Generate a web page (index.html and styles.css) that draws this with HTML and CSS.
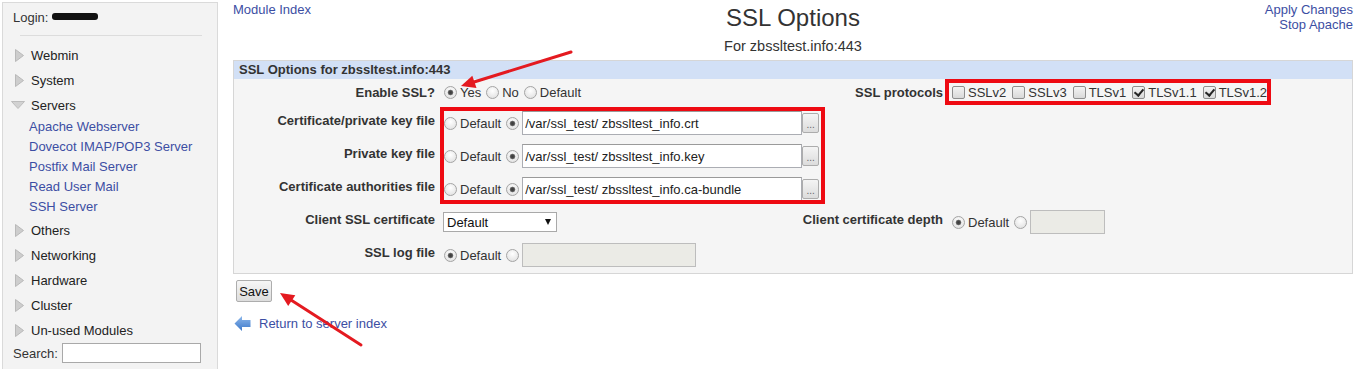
FILE: index.html
```html
<!DOCTYPE html>
<html lang="en">
<head>
<meta charset="utf-8">
<title>SSL Options</title>
<link rel="stylesheet" href="styles.css">
</head>
<body>
<nav class="sidebar">
  <div class="login">Login: <span class="redact"></span></div>
  <div class="sep"></div>
  <ul class="cats">
    <li class="cat"><span class="ico"><svg class="tri-r" width="9" height="13" viewBox="0 0 9 13"><polygon points="0.5,0.5 8.5,6.5 0.5,12.5"/></svg></span>Webmin</li>
    <li class="cat"><span class="ico"><svg class="tri-r" width="9" height="13" viewBox="0 0 9 13"><polygon points="0.5,0.5 8.5,6.5 0.5,12.5"/></svg></span>System</li>
    <li class="cat open"><span class="ico"><svg class="tri-d" width="14" height="8" viewBox="0 0 14 8"><polygon points="0.5,0.5 13.5,0.5 7,7.5"/></svg></span>Servers</li>
    <li class="subs">
      <a href="#">Apache Webserver</a>
      <a href="#">Dovecot IMAP/POP3 Server</a>
      <a href="#">Postfix Mail Server</a>
      <a href="#">Read User Mail</a>
      <a href="#">SSH Server</a>
    </li>
    <li class="cat"><span class="ico"><svg class="tri-r" width="9" height="13" viewBox="0 0 9 13"><polygon points="0.5,0.5 8.5,6.5 0.5,12.5"/></svg></span>Others</li>
    <li class="cat"><span class="ico"><svg class="tri-r" width="9" height="13" viewBox="0 0 9 13"><polygon points="0.5,0.5 8.5,6.5 0.5,12.5"/></svg></span>Networking</li>
    <li class="cat"><span class="ico"><svg class="tri-r" width="9" height="13" viewBox="0 0 9 13"><polygon points="0.5,0.5 8.5,6.5 0.5,12.5"/></svg></span>Hardware</li>
    <li class="cat"><span class="ico"><svg class="tri-r" width="9" height="13" viewBox="0 0 9 13"><polygon points="0.5,0.5 8.5,6.5 0.5,12.5"/></svg></span>Cluster</li>
    <li class="cat"><span class="ico"><svg class="tri-r" width="9" height="13" viewBox="0 0 9 13"><polygon points="0.5,0.5 8.5,6.5 0.5,12.5"/></svg></span>Un-used Modules</li>
  </ul>
  <div class="search"><label for="q">Search:</label><input id="q" class="search-box" type="text"></div>
</nav>

<main class="main">
  <header class="top">
    <div class="top-left"><a href="#">Module Index</a></div>
    <div class="title">
      <h1>SSL Options</h1>
      <div class="sub">For zbssltest.info:443</div>
    </div>
    <div class="top-right"><a href="#">Apply Changes</a><a href="#">Stop Apache</a></div>
  </header>

  <section class="panel">
    <div class="panel-head">SSL Options for zbssltest.info:443</div>
    <div class="form">
      <div class="lbl first">Enable SSL?</div>
      <div class="val">
        <input type="radio" name="en" checked><span class="opt">Yes</span>
        <input type="radio" name="en"><span class="opt">No</span>
        <input type="radio" name="en"><span class="opt">Default</span>
      </div>
      <div class="lbl first">SSL protocols</div>
      <div class="val">
        <input type="checkbox"><span class="copt">SSLv2</span>
        <input type="checkbox"><span class="copt">SSLv3</span>
        <input type="checkbox"><span class="copt">TLSv1</span>
        <input type="checkbox" checked><span class="copt">TLSv1.1</span>
        <input type="checkbox" checked><span class="copt">TLSv1.2</span>
      </div>

      <div class="lbl">Certificate/private key file</div>
      <div class="val wide">
        <input type="radio" name="c1"><span class="opt">Default</span>
        <input type="radio" name="c1" checked><input class="txt" type="text" value="/var/ssl_test/ zbssltest_info.crt"><button class="browse">...</button>
      </div>

      <div class="lbl">Private key file</div>
      <div class="val wide">
        <input type="radio" name="c2"><span class="opt">Default</span>
        <input type="radio" name="c2" checked><input class="txt" type="text" value="/var/ssl_test/ zbssltest_info.key"><button class="browse">...</button>
      </div>

      <div class="lbl">Certificate authorities file</div>
      <div class="val wide">
        <input type="radio" name="c3"><span class="opt">Default</span>
        <input type="radio" name="c3" checked><input class="txt" type="text" value="/var/ssl_test/ zbssltest_info.ca-bundle"><button class="browse">...</button>
      </div>

      <div class="lbl">Client SSL certificate</div>
      <div class="val">
        <span class="sel-wrap"><select class="sel"><option>Default</option></select><span class="sel-arrow"></span></span>
      </div>
      <div class="lbl">Client certificate depth</div>
      <div class="val">
        <input type="radio" name="d" checked><span class="opt">Default</span>
        <input type="radio" name="d"><input class="dis depth" type="text" disabled>
      </div>

      <div class="lbl">SSL log file</div>
      <div class="val wide">
        <input type="radio" name="l" checked><span class="opt">Default</span>
        <input type="radio" name="l"><input class="dis logf" type="text" disabled>
      </div>
    </div>
  </section>

  <div class="actions"><button class="save">Save</button></div>

  <a class="return" href="#">
    <svg class="ret-ico" width="17" height="17" viewBox="0 0 17 17">
      <defs><linearGradient id="rg" x1="0" y1="0" x2="0" y2="1"><stop offset="0" stop-color="#8db8ec"/><stop offset="1" stop-color="#3d78c9"/></linearGradient></defs>
      <path d="M0.5 8.5 L8 1 L8 5 L16.5 5 L16.5 12 L8 12 L8 16 Z" fill="url(#rg)"/>
    </svg>
    <span>Return to server index</span>
  </a>
</main>

<svg class="annot" width="1360" height="369" viewBox="0 0 1360 369">
  <rect x="947" y="81" width="322" height="22" fill="none" stroke="#ee0a12" stroke-width="4"/>
  <rect x="442" y="109" width="381" height="93" fill="none" stroke="#ee0a12" stroke-width="4"/>
  <line x1="571" y1="52" x2="474" y2="82" stroke="#e41a20" stroke-width="3" stroke-linecap="round"/>
  <polygon points="461,86 476.5,88 472.3,75.8" fill="#e41a20"/>
  <line x1="361" y1="345" x2="291" y2="300" stroke="#e41a20" stroke-width="3" stroke-linecap="round"/>
  <polygon points="280,293 295.3,295.2 288.2,306" fill="#e41a20"/>
</svg>
</body>
</html>
```

FILE: styles.css
```css
* { box-sizing: border-box; }
html, body { margin: 0; padding: 0; }
body {
  font-family: "Liberation Sans", Arial, sans-serif;
  font-size: 13px;
  color: #333;
  background: #fff;
  display: flex;
  align-items: flex-start;
  height: 369px;
  overflow: hidden;
  position: relative;
}
a { color: #3c4ea3; text-decoration: none; }
ul { list-style: none; margin: 0; padding: 0; }

/* Sidebar */
.sidebar {
  flex: 0 0 216px;
  width: 216px;
  height: 367px;
  margin: 2px 0 0 2px;
  border: 1px solid #dadada;
  border-bottom-width: 0;
  background: #f3f3f3;
  padding-top: 7px;
}
.login { padding-left: 10px; line-height: 16px; color: #333; }
.redact {
  display: inline-block;
  width: 46px;
  height: 7px;
  background: #111;
  border-radius: 3px;
  vertical-align: 2px;
}
.sep { height: 1px; background: #dcdcdc; margin: 9px 15px 7px 17px; }
.cat {
  display: flex;
  align-items: center;
  height: 25px;
  line-height: 25px;
  color: #222;
}
.cat.open { height: 24px; line-height: 25px; }
.ico { width: 20px; margin-left: 8px; display: flex; align-items: center; }
.tri-r { margin-left: 4px; }
.tri-r polygon { fill: #cdcdcd; stroke: #b9b9b9; stroke-width: 1; }
.tri-d polygon { fill: #d2d2d2; stroke: #bdbdbd; stroke-width: 1; }
.subs { display: flex; flex-direction: column; padding-left: 26px; margin-bottom: 1px; }
.subs a { line-height: 20px; }
.search { display: flex; align-items: center; height: 20px; padding-left: 10px; }
.search label { color: #333; }
.search-box {
  width: 139px;
  height: 20px;
  margin: 0 0 0 4px;
  border: 1px solid #a9a9a9;
  background: #fff;
}

/* Main */
.main { flex: 1; min-width: 0; padding: 2px 7px 0 15px; }
.top { display: grid; grid-template-columns: 1fr auto 1fr; }
.top-left a { line-height: 15px; }
.top-right { display: flex; flex-direction: column; align-items: flex-end; }
.top-right a { line-height: 15px; }
.title { text-align: center; }
.title h1 {
  margin: 2px 0 0;
  font-size: 24px;
  font-weight: normal;
  line-height: 28px;
  color: #333;
}
.title .sub { margin-top: 6px; font-size: 14.5px; line-height: 17px; color: #333; }

.panel { margin-top: 5px; border: 1px solid #d6d6d6; background: #f5f5f5; }
.panel-head {
  height: 18px;
  line-height: 18px;
  padding-left: 5px;
  background: #d2e0f6;
  font-weight: bold;
  color: #333;
}
.form {
  display: grid;
  grid-template-columns: 206px 360px 148px 1fr;
  grid-template-rows: 31px 33px 33px 33px 33px 24px;
  align-items: start;
  padding: 1px 0 6px;
}
.lbl {
  text-align: right;
  padding: 2px 5px 0 0;
  line-height: 16px;
  font-weight: bold;
  color: #333;
  white-space: nowrap;
}
.lbl.first { padding-top: 5px; }
.val { display: flex; align-items: center; height: 24px; white-space: nowrap; }
.val.wide { grid-column: 2 / 5; }
.opt { margin-right: 1px; }
.copt { margin-right: 2px; }

input[type=radio] {
  appearance: none;
  -webkit-appearance: none;
  flex: 0 0 13px;
  width: 13px;
  height: 13px;
  margin: 0 3px 0 4px;
  border: 1px solid #a4a4a4;
  border-radius: 50%;
  background: radial-gradient(circle at 50% 35%, #ffffff, #dcdcdc);
}
input[type=radio]:checked {
  background:
    radial-gradient(circle, #3c3c3c 0, #4a4a4a 1.8px, #8a8a8a 2.6px, rgba(255,255,255,0) 3.2px),
    radial-gradient(circle at 50% 35%, #ffffff, #dcdcdc);
}
input[type=checkbox] {
  appearance: none;
  -webkit-appearance: none;
  position: relative;
  flex: 0 0 13px;
  width: 13px;
  height: 13px;
  margin: 0 3px 0 4px;
  border: 1px solid #8e8e8e;
  border-radius: 2px;
  background: linear-gradient(#f3f3f3, #d9d9d9);
}
input[type=checkbox]:checked::after {
  content: "";
  position: absolute;
  left: 3px;
  top: 0;
  width: 4px;
  height: 7px;
  border: solid #262626;
  border-width: 0 2px 2px 0;
  transform: rotate(40deg);
}

.txt {
  width: 280px;
  height: 24px;
  margin: 0;
  padding: 0 2px;
  border: 1px solid #abadb3;
  border-top-color: #9a9a9a;
  background: #fff;
  font: 13px "Liberation Sans", Arial, sans-serif;
  color: #222;
}
.browse {
  width: 17px;
  height: 20px;
  margin: 0;
  padding: 4px 0 0;
  border: 1px solid #acacac;
  border-radius: 2px;
  background: linear-gradient(#f4f4f4, #dcdcdc);
  font: 10px "Liberation Sans", Arial, sans-serif;
  color: #666;
  line-height: 10px;
}
.sel-wrap { position: relative; display: inline-block; margin-left: 3px; height: 20px; }
.sel {
  appearance: none;
  -webkit-appearance: none;
  width: 114px;
  height: 20px;
  margin: 0;
  padding: 0 0 0 3px;
  border: 1px solid #a9a9a9;
  border-radius: 0;
  background: #fff;
  font: 13px "Liberation Sans", Arial, sans-serif;
  color: #111;
}
.sel-arrow {
  position: absolute;
  right: 6px;
  top: 7px;
  width: 0;
  height: 0;
  border-left: 3.5px solid transparent;
  border-right: 3.5px solid transparent;
  border-top: 6px solid #111;
  pointer-events: none;
}
.dis {
  height: 24px;
  margin: 0;
  border: 1px solid #bdbdbd;
  background: #ebebe6;
}
.depth { width: 75px; }
.logf { width: 174px; }

.actions { margin-top: 6px; padding-left: 3px; height: 22px; }
.save {
  display: block;
  width: 36px;
  height: 22px;
  margin: 0;
  padding: 0;
  border: 1px solid #adadad;
  border-radius: 2px;
  background: linear-gradient(#f6f6f6, #dddddd);
  font: 13px "Liberation Sans", Arial, sans-serif;
  color: #111;
}
.return {
  display: flex;
  align-items: center;
  height: 18px;
  margin-top: 12px;
}
.ret-ico { margin-left: 1px; margin-right: 8px; }

.annot { position: absolute; left: 0; top: 0; pointer-events: none; }
```
